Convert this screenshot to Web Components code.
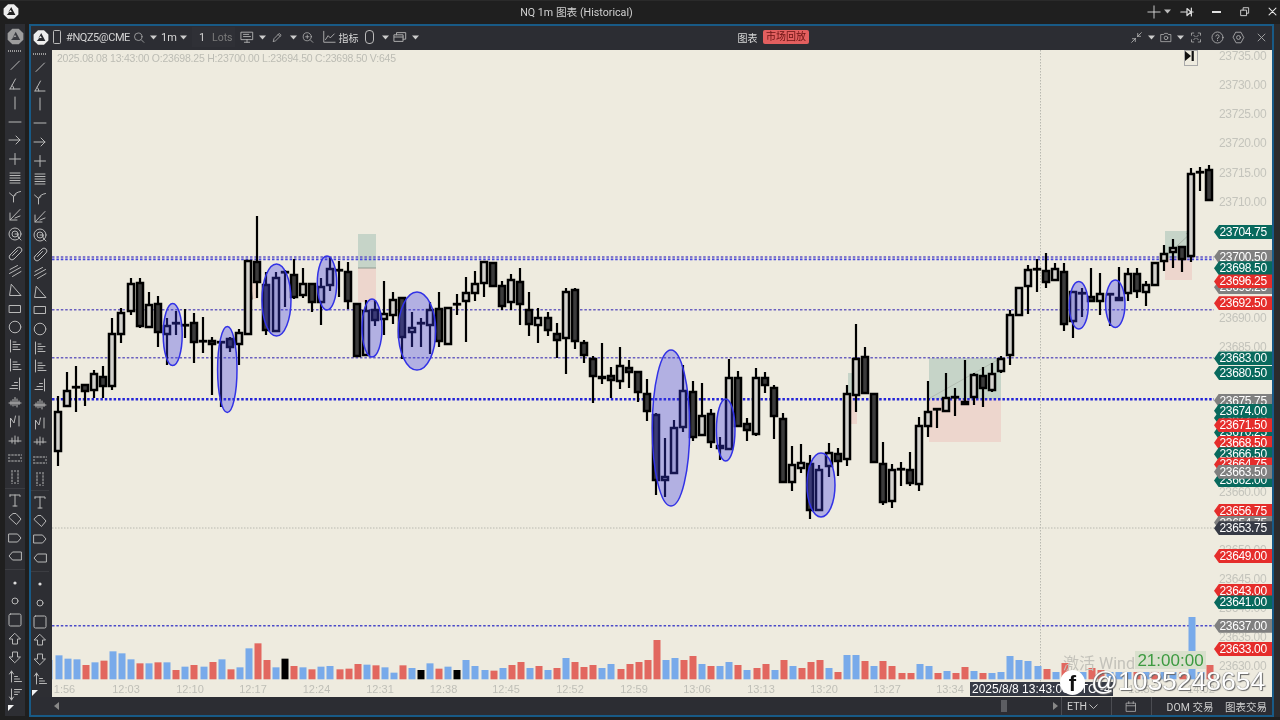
<!DOCTYPE html>
<html lang="zh"><head><meta charset="utf-8"><title>NQ 1m</title>
<style>html,body{margin:0;padding:0;background:#1f1f1f;width:1280px;height:720px;overflow:hidden;font-family:Roboto,"Noto Sans CJK SC",sans-serif}</style>
</head><body>
<app-shell></app-shell>
<script>
const CJK='Roboto,"Noto Sans CJK SC",sans-serif';
const caret=(c='#ccc')=>`<svg width="7" height="5" viewBox="0 0 7 5"><path d="M0 .5H7L3.5 4.5Z" fill="${c}"/></svg>`;
const ic=(d,w=16,h=16,sw=1,c='#b8b8b8',extra='')=>`<svg width="${w}" height="${h}" viewBox="0 0 16 16" fill="none" stroke="${c}" stroke-width="${sw}" stroke-linejoin="round" stroke-linecap="round">${d.startsWith('<')?d:`<path d="${d}"/>`}${extra}</svg>`;
const logo=(bg='#e6e6e6',fg='#2b2c31',s=16)=>`<svg width="${s}" height="${s}" viewBox="0 0 16 16"><path d="M5 .8H11L15.4 5V11L11 15.2H5L.6 11V5Z" fill="${bg}"/><path d="M8.2 3.6 12.4 11.4H3.8L6.4 8.4H8.8L7.6 6.4 5 9.6" fill="${fg}"/></svg>`;

const RAIL={
 slash:'M4 12.5 12.5 4',
 angle:'M3 13H13M3 13 8.5 3M6.8 13C6.8 11.5 6 10 5 9.4',
 vert:'M8 2V14',
 horiz:'M2 8H14',
 arrow:'M2 8H13M9 4 13 8 9 12',
 plus:'M8 2.5V13.5M2.5 8H13.5',
 lines:'M3 3H13M3 5.5H13M3 8H13M3 10.5H13M3 13H13',
 fork:'M6.5 14V8.5M2.5 5 6.5 8.5Q8 4.5 13.5 3.5M6.5 8.5 9 6.5',
 diag:'M13 2.5 3 13M3 6V13H10M13 9 8 11',
 spiral:'<circle cx="8" cy="8" r="6"/><circle cx="8" cy="8" r="3"/><path d="M8 8H11V11L14 14"/>',
 pill:'M3 10 10 3A2.8 2.8 0 0 1 14 7L7 14A2.8 2.8 0 0 1 3 10ZM5.5 10.5 10.5 5.5',
 dlines:'M3 6.5 10.5 2.5M2.5 10.5 13.5 4.5M5.5 13.5 14 8.5',
 tri:'M4.5 2.5 14 13.5H3Z',
 rect:'M2.5 4.5H13.5V11.5H2.5Z',
 circ:'<circle cx="8" cy="8" r="5.8"/>',
 fib1:'M3.5 2V14M6 4H9M6 6.5H13M6 9H10.5M6 11.5H13',
 fib2:'M3.5 2V14M6 5H10M6 7.5H13M6 10H11M6 12.5H14',
 fib3:'M12.5 2V14M3 12.5H10.5M5 9.5H10.5M7.5 6.5H10.5',
 pat:'M2 9H14M4 7V11M6 5.5V12M8 3.5V11.5M10 5V13M12 7V10.5',
 zig:'M3.5 14V5L7 10 8.5 3M12 3V13',
 dots:'M2 9H14M5 6V11M8 4V12M11 5V10',
 hd:'<path stroke-dasharray="1.6 1.6" d="M1.5 5H14.5M1.5 11H14.5M1.5 8H2.5M13.5 8H14.5"/>',
 vd:'<path stroke-dasharray="1.6 1.6" d="M5 1.5V14.5M11 1.5V14.5M8 1.5V2.5M8 13.5V14.5"/>',
 T:'M3 3H13V4.5M3 3V4.5M8 3V14M6 14H10',
 tag:'M2.5 5.5 6 2.5H9L14 8 9.5 13.5 2.5 7Z',
 labr:'M2 4H10.5L14 8 10.5 12H2Z',
 labl:'M14 4H5.5L2 8 5.5 12H14Z',
 dot:'<circle cx="8" cy="8" r="1.6" fill="#ddd" stroke="none"/>',
 ring:'<circle cx="8" cy="8" r="3"/>',
 sq:'<rect x="2" y="2" width="12" height="12" rx="1.5"/>',
 up:'M8 2.5 13.5 8H10.5V13H5.5V8H2.5Z',
 down:'M8 13.5 13.5 8H10.5V3H5.5V8H2.5Z',
 sortu:'M4.5 14V3M2.5 6 4.5 3 6.5 6M7.5 13.5H14.5M7.5 11H12.5M7.5 8.5H10.5',
 sortd:'M4.5 2V13M2.5 10 4.5 13 6.5 10M7.5 2.5H14.5M7.5 5H12.5M7.5 7.5H10.5'
};
const G1=['slash','angle','vert','horiz','arrow','plus','lines','fork','diag','spiral','pill','dlines','tri','rect','circ','fib1','fib2','fib3','pat','zig','dots','hd','vd'];
const G2=['T','tag','labr','labl'];
const G3=['dot','ring','sq','up','down','sortu'];

class ToolRail extends HTMLElement{
 connectedCallback(){
  const outer=this.hasAttribute('outer');
  const row=k=>`<div class="b">${ic(RAIL[k])}</div>`;
  this.attachShadow({mode:'open'}).innerHTML=`<style>
  :host{display:flex;flex-direction:column;position:relative;flex:none;box-sizing:border-box;overflow:hidden;background:#2d2e33;
   width:${outer?20:21}px;padding-top:${outer?2:0}px;padding-right:${outer?0:3}px}
  .l{height:20px;display:flex;align-items:center;justify-content:center}
  .w{height:${outer?10:7.64}px;display:flex;align-items:center;justify-content:center;flex:none}
  .w i{display:block;width:14px;height:2px;background:repeating-linear-gradient(90deg,#9a9a9a 0 1px,transparent 1px 2px)}
  .b{height:18.72px;display:flex;align-items:center;justify-content:center;flex:none}
  .d{height:4.4px;flex:none;display:flex;align-items:center}
  .d i{display:block;width:100%;height:1px;background:#3c3d42}
  .d2{height:7.4px}
  .t{position:absolute;width:0;height:0;border-style:solid;border-width:6px 6px 0 0;border-color:#f2f2f2 transparent transparent transparent;left:${outer?3:1}px;top:${outer?681:640}px}
  </style>
  ${outer?`<div class="l">${logo('#9d9d9d','#3a3b40',17)}</div>`:''}
  <div class="w"><i></i></div>
  ${G1.map(row).join('')}<div class="d"><i></i></div>
  ${G2.map(row).join('')}<div class="d d2"><i></i></div>
  ${G3.map(row).join('')}${outer?row('sortd'):''}
  <div class="t"></div>`;
 }
}
customElements.define('tool-rail',ToolRail);

class TitleBar extends HTMLElement{
 connectedCallback(){
  this.attachShadow({mode:'open'}).innerHTML=`<style>
  :host{display:flex;align-items:center;height:24px;flex:none;background:#1f1f1f;color:#d0d0d0;font:10.7px ${CJK};box-sizing:border-box;border-top:1px solid #2a2a2a;padding-bottom:2px}
  .i{flex:none;display:flex;align-items:center;justify-content:center}
  </style>
  <div class="i" style="width:16px;margin-left:3px">${logo('#eee','#222',17)}</div>
  <div class="i" style="width:113px;margin-left:501px;white-space:nowrap">NQ 1m 图表 (Historical)</div>
  <div class="i" style="width:14px;margin-left:514px">${ic('M1 8H15M8 1V15',14,14,1,'#e0e0e0')}</div>
  <div class="i" style="width:7px;margin-left:3px">${caret('#bbb')}</div>
  <div class="i" style="width:14px;margin-left:9px">${ic('M1 8H8M13 8H15M8 4 12.5 8 8 12ZM13 3.5V12.5',14,14,1.4,'#dcdcdc')}</div>
  <div class="i" style="width:10px;margin-left:17px"><div style="width:9px;height:2px;background:#e0e0e0"></div></div>
  <div class="i" style="width:12px;margin-left:17px">${ic('M3 6H11V14H3ZM6 6V2.5H14V10.5H11',11,11,1.3,'#dcdcdc')}</div>
  <div class="i" style="width:12px;margin-left:16px">${ic('M3 3 13 13M13 3 3 13',11,11,1.5,'#e6e6e6')}</div>`;
 }
}
customElements.define('title-bar',TitleBar);

class ChartToolbar extends HTMLElement{
 connectedCallback(){
  const it=[
   [33,16,logo('#eee','#2b2c31',17)],
   [53,8,`<div style="width:6.5px;height:12px;border:1px solid #bbb;border-radius:1.5px"></div>`],
   [67,62,`<span style="font-size:11px;letter-spacing:-.45px;color:#d4d4d4;white-space:nowrap">#NQZ5@CME</span>`],
   [133,12,ic('<circle cx="7" cy="7" r="5"/><path d="M11 11 14.5 14.5"/>',13,13)],
   [150,7,caret()],
   [162,14,`<span style="font-size:11px;color:#d8d8d8">1m</span>`],
   [180,7,caret()],
   [192,43,`<div style="display:flex;width:100%;height:20px;align-items:center;background:#2f3036;font-size:11px"><span style="width:20px;text-align:center;color:#d0d0d0">1</span><span style="color:#7c7c7c;font-size:10.5px">Lots</span></div>`],
   [240,14,ic('M1.5 2.5H14.5V11H1.5ZM8 11V14M5 14H11M4 5H10M4 7.5H12',14,14)],
   [259,7,caret()],
   [271,12,ic('M3 13 4 9.5 11 2.5 13.5 5 6.5 12ZM9.5 4 12 6.5',13,13)],
   [290,7,caret()],
   [302,12,ic('<circle cx="7" cy="7" r="5.4"/><path d="M11 11 14.5 14.5M7 4.8V9.2M4.8 7H9.2"/>',13,13)],
   [322,14,ic('M2 1.5V14H15M4 11 7 6.5 9.5 9 14 4.5',14,14)],
   [339,19,`<span style="font-size:10px;color:#d8d8d8;white-space:nowrap">指标</span>`],
   [364,10,`<div style="width:7px;height:12px;border:1px solid #bbb;border-radius:4px"></div>`],
   [382,7,caret()],
   [393,14,ic('M1.5 5.5H11.5V13H1.5ZM1.5 8H11.5M4 5.5V3H14.5V10.5H11.5',14,14,1.1,'#b0b0b0')],
   [412,7,caret()],
   [738,19,`<span style="font-size:10px;color:#d8d8d8;white-space:nowrap">图表</span>`],
   [763,46,`<div style="width:100%;height:14px;background:#e25f5f;border-radius:2px;color:#6a1313;font-size:10px;text-align:center;line-height:14px;white-space:nowrap">市场回放</div>`],
   [1130,13,ic('M9 7 14 2M9.5 3V6.5H13M7 9 2 14M6.5 13V9.5H3',13,13,1,'#b8b8b8')],
   [1148,7,caret()],
   [1160,12,ic('<path d="M1.5 4H5L6 2.5H10L11 4H14.5V13.5H1.5Z"/><circle cx="8" cy="8.5" r="2.4"/>',13,13)],
   [1177,7,caret()],
   [1190,12,ic('M2 5V2H5M11 2H14V5M14 11V14H11M5 14H2V11M5 5 7 7M11 5 9 7M5 11 7 9M11 11 9 9',13,13,1,'#b8b8b8')],
   [1211,13,ic('<circle cx="8" cy="8" r="6.8"/><path d="M6 6.2A2 2 0 1 1 8 8.6V9.6M8 11.5V11.8"/>',13,13)],
   [1232,13,ic('<path d="M5 1.5H11L14.5 8 11 14.5H5L1.5 8Z"/><circle cx="8" cy="8" r="2.4"/>',13,13)],
   [1256,11,ic('M3 3 13 13M13 3 3 13',11,11,1.3,'#aaa')]
  ];
  let pos=31;
  const html=it.map(([x,w,h])=>{const m=x-pos;pos=x+w;return `<div class="i" style="width:${w}px;margin-left:${m}px">${h}</div>`}).join('');
  this.attachShadow({mode:'open'}).innerHTML=`<style>
  :host{display:flex;align-items:center;height:24px;box-sizing:border-box;padding-bottom:2px;flex:none;background:#2c2d33;font-family:${CJK}}
  .i{flex:none;display:flex;align-items:center;justify-content:center}
  </style>${html}`;
 }
}
customElements.define('chart-toolbar',ChartToolbar);

class StatusBar extends HTMLElement{
 connectedCallback(){
  const t=(s)=>`<span style="font-size:10.5px;color:#cfcfcf;white-space:nowrap">${s}</span>`;
  const sep=`<div style="width:1px;height:18px;background:#4b4c52"></div>`;
  const it=[
   [54,5,`<svg width="5" height="8"><path d="M5 0V8L0 4Z" fill="#888"/></svg>`],
   [1000,7,`<div style="width:6px;height:12px;background:#5c5d62"></div>`],
   [1053,5,`<svg width="5" height="8"><path d="M0 0V8L5 4Z" fill="#888"/></svg>`],
   [1061,1,sep],
   [1067,20,t('ETH')],
   [1089,9,`<svg width="9" height="5" viewBox="0 0 9 5" fill="none" stroke="#bbb"><path d="M.5 .5 4.5 4.5 8.5 .5"/></svg>`],
   [1111,1,sep],
   [1125,12,ic('M2 3.5H14V14.5H2ZM2 7H14M5 1.5V4M11 1.5V4',13,13)],
   [1151,1,sep],
   [1166,48,t('DOM 交易')],
   [1226,40,t('图表交易')]
  ];
  let pos=31;
  const html=it.map(([x,w,h])=>{const m=x-pos;pos=x+w;return `<div class="i" style="width:${w}px;margin-left:${m}px">${h}</div>`}).join('');
  this.attachShadow({mode:'open'}).innerHTML=`<style>
  :host{display:flex;align-items:center;height:18px;flex:none;background:#2c2d33;font-family:${CJK}}
  .i{flex:none;display:flex;align-items:center;justify-content:center}
  </style>${html}`;
 }
}
customElements.define('status-bar',StatusBar);

const CANDLES=[
['L',411,452,396,466],['L',390,407,372,407],['Z',387,387,366,412],['D',384,392,384,406],['L',373,391,370,398],['D',376,387,366,398],['L',333,387,318,390],['L',312,335,308,343],['L',283,312,278,315],['D',282,327,278,328],
['L',304,328,292,328],['D',303,333,296,347],['L',325,335,318,365],['Z',323,323,311,335],['Z',325,325,309,338],['D',322,343,313,363],['Z',341,341,317,353],['D',340,345,337,395],['Z',342,342,342,407],['D',338,348,337,352],
['L',332,345,329,365],['L',260,335,260,335],['D',261,283,216,298],['D',284,331,272,335],['L',277,332,272,332],['Z',272,272,270,307],['D',274,298,259,299],['L',283,296,268,298],['D',283,303,283,312],['L',286,303,278,325],
['L',268,286,257,291],['Z',270,270,261,297],['D',271,302,262,309],['D',303,357,303,357],['L',310,356,300,356],['D',309,321,300,326],['L',313,320,281,335],['L',299,316,292,324],['D',297,338,297,359],['L',327,333,312,347],
['Z',323,323,318,347],['L',309,326,302,354],['D',308,342,292,347],['L',307,345,307,345],['Z',304,304,294,315],['L',292,302,277,342],['L',283,294,271,301],['L',261,284,261,297],['D',262,287,262,287],['D',285,307,281,310],
['L',279,303,274,310],['D',281,305,268,325],['D',309,325,292,336],['L',317,326,308,343],['D',317,331,312,336],['D',333,341,323,358],['L',291,339,288,374],['D',289,342,288,349],['D',342,356,340,363],['D',358,377,356,403],
['L',376,379,343,384],['D',375,381,367,398],['L',365,382,347,389],['D',367,373,360,388],['D',371,393,371,402],['D',393,412,379,421],['D',414,481,413,495],['L',476,481,438,497],['L',427,474,420,474],['L',390,428,365,432],
['D',391,438,381,441],['L',415,436,383,436],['D',413,443,409,448],['D',445,449,437,460],['L',377,450,359,450],['D',377,427,371,427],['D',423,431,418,441],['L',377,435,368,436],['D',377,386,372,393],['D',387,417,385,439],
['D',418,483,413,483],['L',464,483,446,491],['L',462,469,444,473],['D',463,511,455,519],['L',469,511,465,511],['L',452,467,443,477],['D',453,462,448,476],['L',393,460,385,466],['L',358,396,324,412],['D',356,394,347,394],
['D',393,463,393,463],['D',463,503,442,505],['L',469,502,464,508],['Z',469,469,462,486],['D',469,484,452,486],['L',425,485,417,491],['L',411,427,381,437],['Z',409,409,408,428],['L',397,412,373,412],['Z',397,397,388,416],
['D',401,405,360,405],['L',374,398,373,405],['D',375,389,367,407],['L',373,391,363,392],['L',358,372,356,373],['L',314,356,310,365],['L',287,316,287,316],['L',269,287,265,314],['Z',269,269,259,292],['D',270,283,253,288],
['L',268,281,263,281],['D',271,325,263,331],['L',291,322,291,338],['Z',293,293,288,317],['D',296,302,268,302],['L',293,302,273,315],['Z',294,294,294,326],['L',297,301,267,301],['L',273,294,268,301],['D',273,292,268,298],
['L',284,293,281,306],['L',262,286,262,286],['L',253,262,245,271],['L',247,253,239,268],['D',246,260,246,272],['L',173,257,168,262],['Z',172,172,167,191],['D',169,201,165,201]];

const VOL=[[90,'B'],
[76,'B'],[86,'B'],[88,'B'],[105,'R'],[97,'B'],[92,'R'],[64,'B'],[70,'B'],[88,'B'],[100,'R'],[100,'B'],[97,'R'],[97,'B'],[120,'R'],[110,'B'],[105,'R'],[110,'B'],[96,'R'],[88,'B'],[118,'R'],[112,'B'],[55,'B'],[40,'R'],[90,'R'],[112,'B'],[86,'K'],[108,'R'],[112,'B'],[118,'R'],[110,'B'],[108,'B'],[118,'R'],[116,'R'],[102,'R'],[104,'B'],[106,'R'],[112,'B'],[128,'B'],[106,'R'],[114,'B'],[120,'K'],[100,'B'],[116,'R'],[110,'B'],[120,'K'],[90,'B'],[108,'B'],[120,'B'],[122,'R']
].map(([z,c])=>[630+z/3,c]).concat([
[668,'B'],[665,'R'],[662,'R'],[668,'B'],[666,'R'],[670,'B'],[668,'R'],[658,'B'],[662,'R'],[667,'R'],[665,'R'],[668,'B'],[664,'B'],[669,'R'],[664,'R'],[662,'R'],[660,'R'],[640,'R'],[660,'B'],[658,'B'],[660,'R'],[656,'R'],[664,'B'],[666,'R'],[666,'B'],[662,'B'],[665,'R'],[670,'B'],[668,'R'],[664,'R'],[670,'B'],[660,'R'],[666,'B'],[668,'R'],[662,'R'],[660,'R'],[668,'B'],[672,'R'],[655,'B'],[655,'B'],[661,'R'],[666,'B'],[661,'R'],[666,'R'],
[673,'R'],[673,'R'],[664,'B'],[666,'B'],[673,'R'],[671,'B'],[673,'R'],[667,'R'],[671,'B'],[673,'R'],[673,'B'],[672,'B'],[656,'B'],[660,'B'],[661,'B'],[666,'B'],[669,'R'],[672,'B'],[663,'R'],[672,'B'],[672,'B'],[668,'R'],[670,'R'],[672,'B'],[672,'B'],[672,'B'],[672,'R'],[672,'B'],[672,'R'],[672,'B'],[672,'B'],[672,'R'],[617,'B'],[672,'B'],[665,'R']]);

const ELL=[[172.7,334.5,9.5,31],[227.3,369.5,9.7,43],[276.5,300,14.5,36],[327,283,9.7,27],[372,328,10,29],[417,331,18.7,39],[671,428,18.7,78],[725.7,430,9.3,31],[821,485,14,32],[1078.8,305.3,9.5,23.7],[1115.3,303.7,9.7,23.7]];
const TAGS=[
[23704.75,'g'],[23695.25,'a'],[23700.50,'a'],[23698.50,'g'],[23696.25,'r'],[23692.50,'r'],[23683.00,'g'],[23680.50,'g'],[23675.75,'a'],[23672.75,'g'],[23670.25,'g'],[23674.00,'g'],[23671.50,'r'],[23668.50,'r'],[23666.50,'g'],[23662.00,'g'],[23664.75,'r'],[23663.50,'a'],[23656.75,'r'],[23654.75,'a'],[23653.75,'d'],[23649.00,'r'],[23643.00,'r'],[23641.00,'g'],[23637.00,'a'],[23633.00,'r']];
const yOf=p=>56.3+(23735-p)*5.81;

class ChartPane extends HTMLElement{
 connectedCallback(){
  const step=9.065,x0=58;
  const col={L:'#d2d1cc',D:'#3b3b3b'},vc={B:'#78aaea',R:'#e2675f',K:'#000'};
  let vol='',cand='';
  VOL.forEach(([t,c],k)=>{const i=k-1,x=Math.round(x0+step*i+.5);vol+=`<rect x="${x-3.5}" y="${t}" width="7" height="${679.3-t}" fill="${vc[c]}"/>`});
  CANDLES.forEach(([k,t,b,wt,wb],i)=>{const x=Math.round(x0+step*i);
   if(wt<t||wb>b)cand+=`<path d="M${x} ${wt}V${wb}" stroke="#000" stroke-width="2.2"/>`;
   if(k==='Z')cand+=`<rect x="${x-4.2}" y="${t-1.2}" width="8.4" height="2.8" fill="#000"/>`;
   else cand+=`<rect x="${x-3}" y="${t+1}" width="6" height="${Math.max(b-t-2,.5)}" fill="${col[k]}" stroke="#000" stroke-width="2.5"/>`;
  });
  const ell=ELL.map(([cx,cy,rx,ry])=>`<ellipse cx="${cx}" cy="${cy}" rx="${rx}" ry="${ry}" fill="rgba(62,62,232,.34)" stroke="#3232e6" stroke-width="1.5"/>`).join('');
  const hl=(y,c,w)=>`<path d="M52 ${y}H1214" stroke="${c}" stroke-width="${w}" stroke-dasharray="2.5 1.9"/>`;
  const shade=(x,w,y0,y1,y2)=>`<rect x="${x}" y="${y0}" width="${w}" height="${y1-y0}" fill="#c6d4c8"/><rect x="${x}" y="${y1}" width="${w}" height="${y2-y1}" fill="#edd6cd"/>`;
  const ticks=[];for(let p=23735;p>=23630;p-=5)ticks.push(`<span class="tick" style="top:${yOf(p)-50-7}px">${p}.00</span>`);
  const tags=TAGS.map(([p,c])=>`<span class="tag ${c}" style="top:${yOf(p)-50-7}px">${p.toFixed(2)}</span>`).join('');
  const times=[['1:56',64.5],['12:03',126],['12:10',190],['12:17',253],['12:24',316.5],['12:31',380],['12:38',443.5],['12:45',506],['12:52',570],['12:59',634],['13:06',697],['13:13',761],['13:20',824],['13:27',887],['13:34',950],['13:55',1142],['14:02',1201]]
   .map(([s,x])=>`<span class="time" style="left:${x-52-20}px">${s}</span>`).join('');
  this.attachShadow({mode:'open'}).innerHTML=`<style>
  :host{display:block;position:relative;flex:1;min-height:0;background:#eeebdf;overflow:hidden;font-family:"Liberation Sans",Arial,sans-serif}
  svg{position:absolute;left:0;top:0}
  .info{position:absolute;left:5px;top:2px;font-size:10.5px;letter-spacing:-.22px;line-height:13px;color:#bcbcb4;white-space:nowrap}
  .tick{position:absolute;left:1167px;width:47px;height:14px;line-height:14px;font-size:12px;letter-spacing:-.35px;color:#c4c4bc;white-space:nowrap}
  .time{position:absolute;top:632px;width:40px;text-align:center;font-size:11px;line-height:14px;color:#bfbfb7}
  .tag{position:absolute;left:1162px;width:58px;height:14px;line-height:14px;box-sizing:border-box;padding-left:5.5px;font-size:12px;letter-spacing:-.35px;color:#fff;white-space:nowrap;clip-path:polygon(5px 0,100% 0,100% 100%,5px 100%,0 50%)}
  .g{background:#08695d}.r{background:#e52d2b}.a{background:#808080}.d{background:#363a45}
  .goto{position:absolute;left:1132px;top:0;width:12px;height:14px;border:1px solid #aaa;display:flex;align-items:center;justify-content:center;background:#eeebdf}
  .cross{position:absolute;left:918px;top:632px;height:14px;width:143px;background:#363a45;color:#fff;font-size:12px;line-height:14px;padding-left:2px;box-sizing:border-box;white-space:nowrap}
  .wm{position:absolute;left:1011px;top:600px;font:16px ${CJK};color:#c3c2ba;white-space:nowrap}
  .clock{position:absolute;left:1083px;top:601px;width:71px;height:18px;background:#d9e0cd;color:#3c9a40;font-size:17px;line-height:19px;text-align:center}
  .fb{position:absolute;left:1008px;top:620px;width:25px;height:25px;border-radius:50%;background:#fff;color:#111;font:bold 22px/27px "Liberation Sans",sans-serif;text-align:center}
  .at{position:absolute;left:1039px;top:615px;font-size:26.5px;line-height:32px;color:#fff;text-shadow:1px 1px 1px #666,-.5px 0 1px #888;white-space:nowrap}
  </style>
  <svg width="1220" height="647" viewBox="52 50 1220 647">
   <path d="M1040.5 50V697M52 528H1214" stroke="#b9b9b0" stroke-width="1" stroke-dasharray="1.5 1.5"/>
   ${shade(358,18,234,268,302)}<path d="M358 268H376" stroke="#8f9a90"/>
   ${shade(929,72,358,399,442)}<path d="M930 398 1001 358" stroke="#b3bdb2"/>
   ${shade(1165,27,231,258,280)}<path d="M1165 257 1192 232" stroke="#a9b3a8"/><path d="M1186 233H1192V240Z" fill="#9aa39a"/>
   ${shade(848,9,373,396,424)}
   <rect x="250" y="282" width="8" height="17" fill="#ecd9cc"/><path d="M248 296 252 291 253 300Z" fill="#8b8b85"/>
   ${hl(257,'#6157c4',1.6)}${hl(259.4,'#4444dc',1.6)}${hl(309.8,'#6a60c0',1.6)}${hl(357.8,'#6a60c0',1.6)}${hl(399.3,'#2323d8',2.4)}${hl(625.8,'#4a4ac8',1.6)}
   ${vol}${cand}${ell}
  </svg>
  <div class="info">2025.08.08 13:43:00 O:23698.25 H:23700.00 L:23694.50 C:23698.50 V:645</div>
  <div class="goto"><svg width="9" height="10"><path d="M0 0V10L6 5Z" fill="#111"/><rect x="6.6" y="0" width="2.2" height="10" fill="#111"/></svg></div>
  ${ticks.join('')}${tags}${times}
  <div class="wm">激活 Windows</div>
  <div class="clock">21:00:00</div>
  <div class="cross">2025/8/8 13:43:00 UTC -4</div>
  <div class="fb">f</div>
  <div class="at">@1035248654</div>`;
 }
}
customElements.define('chart-pane',ChartPane);

class ChartWindow extends HTMLElement{
 connectedCallback(){
  this.attachShadow({mode:'open'}).innerHTML=`<style>
  :host{display:flex;flex-direction:column;box-sizing:border-box;width:1245px;flex:none;margin-left:4px;border:2px solid #185a86;height:693px}
  .mid{flex:1;min-height:0;display:flex}
  </style>
  <slot name="bar"></slot><div class="mid"><slot name="rail"></slot><slot name="pane"></slot></div><slot name="status"></slot>`;
 }
}
customElements.define('chart-window',ChartWindow);

class AppShell extends HTMLElement{
 connectedCallback(){
  this.attachShadow({mode:'open'}).innerHTML=`<style>
  :host{display:flex;flex-direction:column;width:1280px;height:720px;background:#1f1f1f;overflow:hidden;filter:blur(.3px)}
  .body{display:flex;flex:1;min-height:0}
  .outer{margin-left:5px;height:692px;display:flex}
  .right{flex:1;height:693px;background:#2b2b2d}
  </style>
  <title-bar></title-bar>
  <div class="body">
   <div class="outer"><tool-rail outer></tool-rail></div>
   <chart-window>
     <chart-toolbar slot="bar"></chart-toolbar>
     <tool-rail slot="rail"></tool-rail>
     <chart-pane slot="pane"></chart-pane>
     <status-bar slot="status"></status-bar>
   </chart-window>
   <div class="right"></div>
  </div>`;
 }
}
customElements.define('app-shell',AppShell);
</script>
</body></html>
